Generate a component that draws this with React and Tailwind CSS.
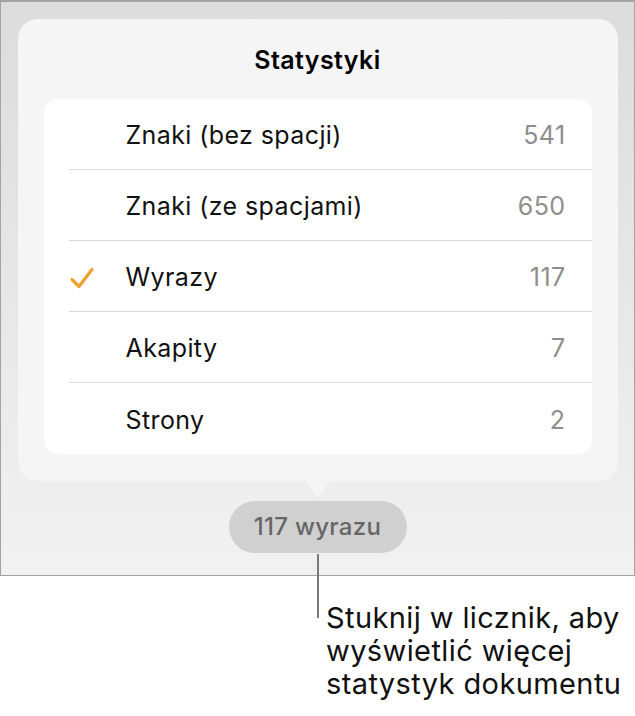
import React from "react";

const rows = [
  { label: "Znaki (bez spacji)", value: "541", checked: false },
  { label: "Znaki (ze spacjami)", value: "650", checked: false },
  { label: "Wyrazy", value: "117", checked: true },
  { label: "Akapity", value: "7", checked: false },
  { label: "Strony", value: "2", checked: false },
];

export default function App() {
  return (
    <div className="w-[635px] h-[716px] bg-white" style={{ fontFamily: "Inter, 'Noto Sans', sans-serif" }}>
      <div className="h-[576px] border border-[#a3a3a3] border-t-2 bg-gradient-to-b from-[#dcdcdc] to-[#f1f1f1] px-[16px] pt-[17px] flex flex-col items-center">
        <div className="w-[600px] bg-[#f5f5f5] rounded-[20px] px-[26px] pb-[27px] flex flex-col">
          <div className="h-[80px] pt-[4px] flex items-center justify-center text-[25px] font-semibold text-black tracking-[0.4px]">
            Statystyki
          </div>
          <div className="bg-white rounded-[14px]">
            {rows.map((r, i) => (
              <div key={r.label} className="h-[71px] flex items-stretch">
                <div className="w-[25px]" />
                <div className={`flex-1 flex items-center pt-[4px] pr-[26px] ${i < rows.length - 1 ? "border-b border-[#d9d9d9]" : ""}`}>
                  <div className="w-[57px] flex items-center">
                    {r.checked && (
                      <svg width="26" height="22" viewBox="0 0 26 22">
                        <path d="M3 12.5 L10 19.5 L23 2.5" fill="none" stroke="#f0a030" strokeWidth="3.2" strokeLinecap="round" strokeLinejoin="round" />
                      </svg>
                    )}
                  </div>
                  <div className="flex-1 text-[25px] tracking-[0.4px] text-[#111]">{r.label}</div>
                  <div className="text-[25px] tracking-[0.4px] text-[#8e8e8e]">{r.value}</div>
                </div>
              </div>
            ))}
          </div>
        </div>
        <svg width="56" height="20" viewBox="0 0 56 20" className="-mt-px">
          <path d="M0 0 L12 0 Q16 0 18.5 4 L26 16 Q28 19 30 16 L37.5 4 Q40 0 44 0 L56 0 Z" fill="#f5f5f5" />
        </svg>
        <div className="relative mt-[1px]">
          <div className="w-[178px] h-[52px] rounded-full bg-[#d0d0d0] flex items-center justify-center text-[24px] tracking-[0.3px] font-medium text-[#666]">
            117 wyrazu
          </div>
          <div className="absolute left-[88px] top-[53px] w-[2px] h-[64px] bg-[#7a7a7a]" />
        </div>
      </div>
      <div className="pl-[326px] pt-[25px] text-[29px] tracking-[0.4px] leading-[33px] text-[#111]">
        <div>Stuknij w licznik, aby</div>
        <div>wyświetlić więcej</div>
        <div>statystyk dokumentu</div>
      </div>
    </div>
  );
}
